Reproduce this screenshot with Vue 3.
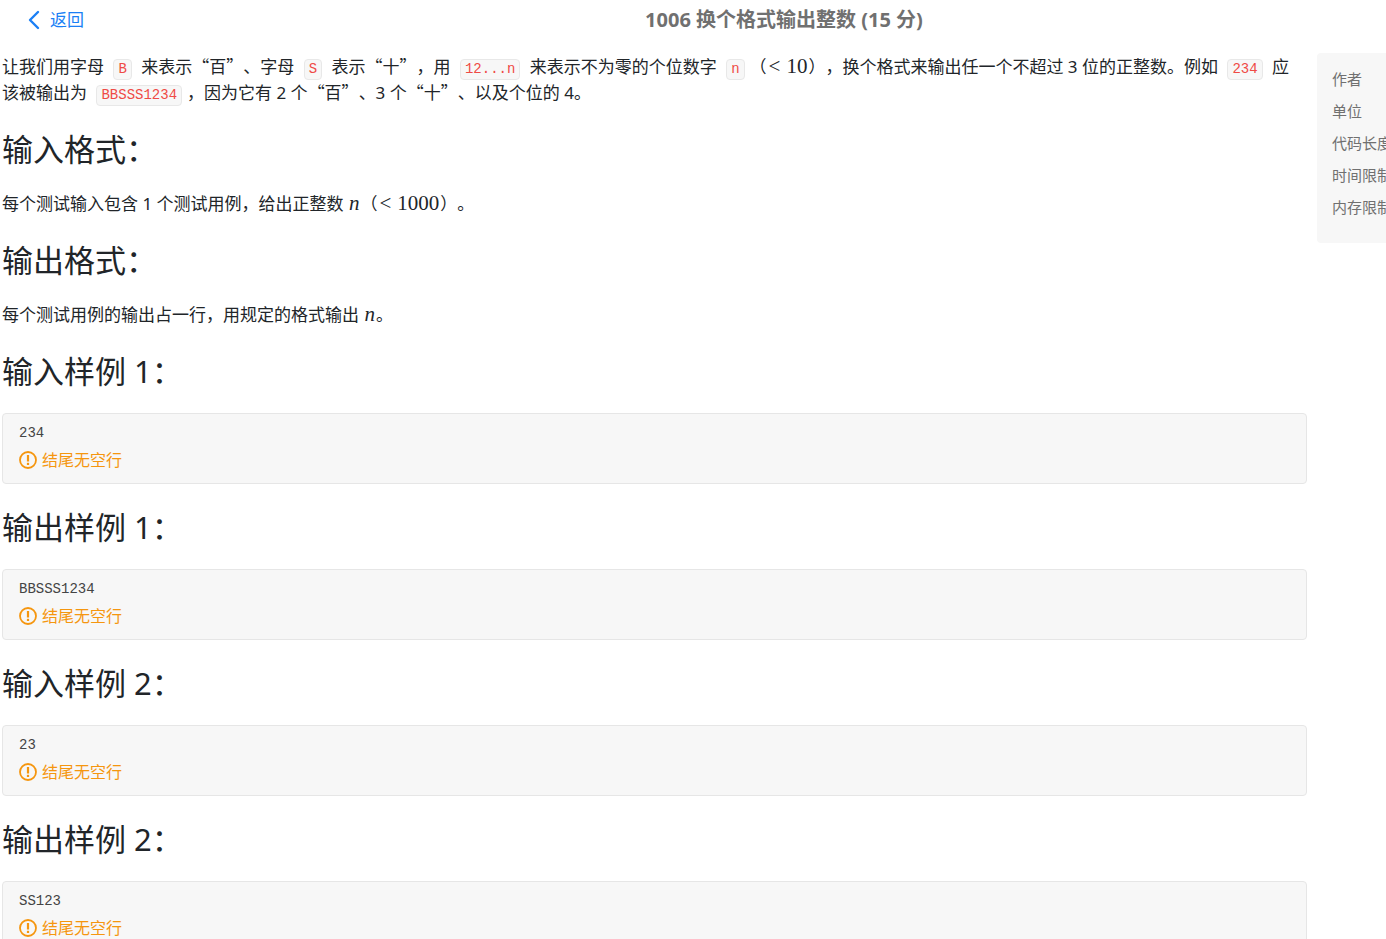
<script setup>
const meta = ['作者', '单位', '代码长度限制', '时间限制', '内存限制']
const samples = [
  { title: '输入样例 1：', code: '234' },
  { title: '输出样例 1：', code: 'BBSSS1234' },
  { title: '输入样例 2：', code: '23' },
  { title: '输出样例 2：', code: 'SS123' },
]
</script>

<template>
  <div class="page" lang="zh-CN">
    <header class="top">
      <a class="back" href="#">
        <svg width="12" height="20" viewBox="0 0 12 20" aria-hidden="true">
          <path d="M10 2 L2 10 L10 18" fill="none" stroke="currentColor" stroke-width="2.4" stroke-linecap="round" stroke-linejoin="round" />
        </svg>
        <span>返回</span>
      </a>
      <h1>1006 换个格式输出整数 (15 分)</h1>
    </header>
    <div class="body">
      <main>
        <p>让我们用字母 <code>B</code> 来表示<span class="han">“百”</span>、字母 <code>S</code> 表示<span class="han">“十”</span>，用 <code>12...n</code> 来表示不为零的个位数字 <code>n</code>（<span class="math"><span class="rel">&lt;</span>10</span>），换个格式来输出任一个不超过 3 位的正整数。例如 <code>234</code> 应该被输出为 <code>BBSSS1234</code>，因为它有 2 个<span class="han">“百”</span>、3 个<span class="han">“十”</span>、以及个位的 4。</p>
        <h2>输入格式：</h2>
        <p>每个测试输入包含 1 个测试用例，给出正整数 <i class="math">n</i>（<span class="math"><span class="rel">&lt;</span>1000</span>）。</p>
        <h2>输出格式：</h2>
        <p>每个测试用例的输出占一行，用规定的格式输出 <i class="math">n</i>。</p>
        <template v-for="s in samples" :key="s.title">
          <h2>{{ s.title }}</h2>
          <div class="sample">
            <pre>{{ s.code }}</pre>
            <div class="note">
              <svg width="18" height="18" viewBox="0 0 18 18" aria-hidden="true">
                <circle cx="9" cy="9" r="8" fill="none" stroke="currentColor" stroke-width="1.8" />
                <path d="M9 4V10.5" fill="none" stroke="currentColor" stroke-width="2.2" />
                <path d="M9 11.8V14" fill="none" stroke="currentColor" stroke-width="2.2" />
              </svg>
              <span>结尾无空行</span>
            </div>
          </div>
        </template>
      </main>
      <aside>
        <div v-for="m in meta" :key="m">{{ m }}</div>
      </aside>
    </div>
  </div>
</template>

<style>
body {
  margin: 0;
  background: #fff;
}
</style>

<style scoped>
.page {
  height: 100vh;
  overflow: hidden;
  font-family: "Noto Sans", "Noto Sans CJK SC", sans-serif;
  font-size: 17px;
  line-height: 26px;
  color: #212529;
  text-spacing-trim: space-all;
}
.top {
  display: grid;
  grid-template-columns: 182px 1fr;
  align-items: center;
  height: 40px;
  margin-bottom: 13px;
}
.back {
  display: flex;
  align-items: center;
  gap: 10px;
  padding-left: 28px;
  color: #1a7ff5;
  text-decoration: none;
}
h1 {
  margin: 0;
  text-align: center;
  font-size: 20px;
  font-weight: 700;
  color: #707070;
}
.body {
  display: grid;
  grid-template-columns: minmax(0, 1fr) 69px;
  gap: 10px;
  align-items: start;
  padding-left: 2px;
}
main {
  padding-top: 1px;
}
p {
  margin: 0;
  padding-right: 12px;
}
.han {
  font-family: "Noto Sans CJK SC", sans-serif;
  line-height: 1;
}
h2 {
  margin: 25px 0 24px;
  font-size: 31px;
  line-height: 36px;
  font-weight: 400;
}
code {
  display: inline-block;
  margin: 0 5px;
  padding: 0 4px;
  border: 1px solid #e8e8e8;
  border-radius: 4px;
  background: #f7f7f7;
  color: #ef4a45;
  font-family: "Liberation Mono", monospace;
  font-size: 14px;
  line-height: 19px;
}
.math {
  margin: 0 1px;
  font-family: "Liberation Serif", serif;
  font-size: 21px;
  line-height: 1;
}
.rel {
  margin: 0 6px 0 1px;
}
.sample {
  padding: 8px 16px 7px;
  border: 1px solid #e6e6e6;
  border-radius: 4px;
  background: #f7f7f7;
}
pre {
  margin: 0;
  font-family: "Liberation Mono", monospace;
  font-size: 14px;
  line-height: 22px;
  color: #444;
}
.note {
  display: flex;
  align-items: center;
  gap: 5px;
  font-size: 16px;
  line-height: 32px;
  color: #f5960f;
}
aside {
  padding: 10px 0 20px 15px;
  border-radius: 4px 0 0 4px;
  background: #f7f7f7;
  color: #707070;
  font-size: 15px;
  line-height: 32px;
  white-space: nowrap;
  overflow: hidden;
}
</style>
